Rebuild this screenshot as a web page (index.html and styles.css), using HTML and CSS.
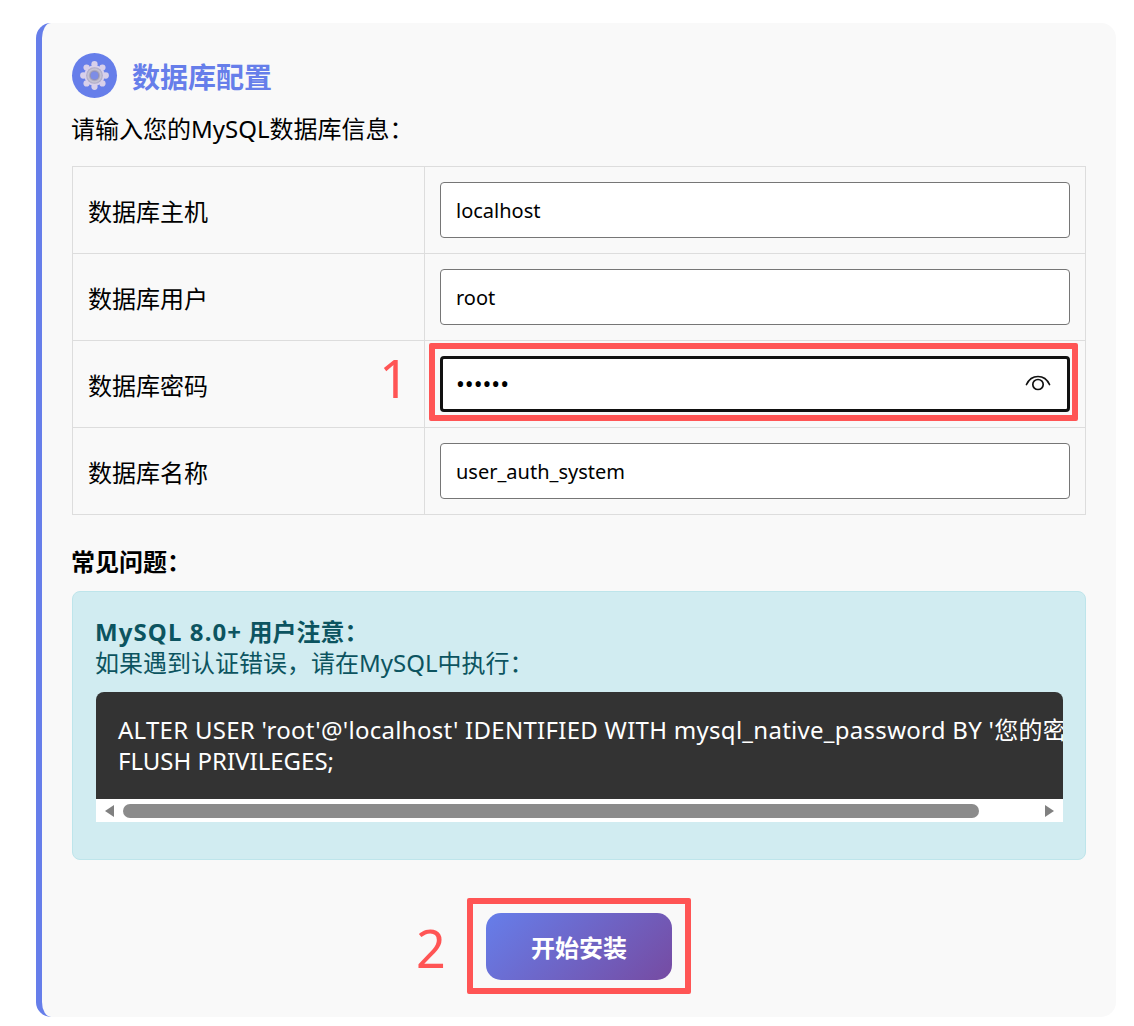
FILE: index.html
```html
<!DOCTYPE html>
<html lang="zh-CN">

<head>
    <meta charset="UTF-8">
    <title>数据库配置</title>
    <link rel="stylesheet" href="styles.css">
</head>

<body>
    <div class="card">
        <!-- header -->
        <div class="card-head">
            <span class="head-icon">
                <svg width="45" height="45" viewBox="0 0 46 46">
                    <defs>
                        <radialGradient id="ring">
                            <stop offset="45%" stop-color="#8d8aa8" />
                            <stop offset="75%" stop-color="#c9c6d6" />
                            <stop offset="100%" stop-color="#aaa6c4" />
                        </radialGradient>
                    </defs>
                    <g fill="#d8d0ea">
                        <circle cx="23" cy="23" r="10.5" />
                        <circle cx="23" cy="11.5" r="3.2" />
                        <circle cx="23" cy="34.5" r="3.2" />
                        <circle cx="11.5" cy="23" r="3.2" />
                        <circle cx="34.5" cy="23" r="3.2" />
                        <circle cx="14.9" cy="14.9" r="3.2" />
                        <circle cx="31.1" cy="14.9" r="3.2" />
                        <circle cx="14.9" cy="31.1" r="3.2" />
                        <circle cx="31.1" cy="31.1" r="3.2" />
                    </g>
                    <circle cx="23" cy="23" r="8.5" fill="url(#ring)" />
                    <circle cx="23" cy="23" r="4" fill="#7d8de6" />
                </svg>
            </span>
            <h2 class="card-title">数据库配置</h2>
        </div>
        <p class="intro">请输入您的MySQL数据库信息：</p>

        <!-- form table -->
        <table class="db-table">
            <tr>
                <td class="label-cell">数据库主机</td>
                <td class="input-cell"><input class="field" type="text" value="localhost"></td>
            </tr>
            <tr>
                <td class="label-cell">数据库用户</td>
                <td class="input-cell"><input class="field" type="text" value="root"></td>
            </tr>
            <tr>
                <td class="label-cell">
                    数据库密码
                    <span class="mark-num mark-one">1</span>
                </td>
                <td class="input-cell">
                    <input class="field field-focus" type="password" value="secret">
                    <svg class="eye-icon" width="28" height="24" viewBox="0 0 28 24">
                        <path d="M2.5 13.5 C5 8 9 5.5 14 5.5 C19 5.5 23 8 25.5 13.5" fill="none" stroke="#111" stroke-width="1.7" stroke-linecap="round" />
                        <ellipse cx="14" cy="13.5" rx="5.2" ry="5" fill="none" stroke="#111" stroke-width="1.7" />
                    </svg>
                    <span class="mark-box mark-box-field"></span>
                </td>
            </tr>
            <tr>
                <td class="label-cell">数据库名称</td>
                <td class="input-cell"><input class="field" type="text" value="user_auth_system"></td>
            </tr>
        </table>

        <h4 class="faq-title">常见问题：</h4>
        <div class="notice">
            <strong class="notice-title"><span class="wide-latin">MySQL 8.0+</span> 用户注意：</strong>
            <div class="notice-text">如果遇到认证错误，请在MySQL中执行：</div>
            <div class="code-wrap">
                <pre class="code"><span class="code-long">ALTER USER 'root'@'localhost' IDENTIFIED WITH mysql_native_password BY '您的密码';</span>
FLUSH PRIVILEGES;</pre>
                <!-- scrollbar -->
                <div class="scrollbar">
                    <span class="arrow-left"></span>
                    <span class="thumb"></span>
                    <span class="arrow-right"></span>
                </div>
            </div>
        </div>

        <div class="actions">
            <div class="btn-wrap">
                <span class="mark-num mark-two">2</span>
                <button class="install-btn" type="button">开始安装</button>
                <span class="mark-box mark-box-btn"></span>
            </div>
        </div>
    </div>
</body>

</html>
```

FILE: styles.css
```css
* {
    box-sizing: border-box;
}

body {
    margin: 0;
    padding: 23px 18px 9px 36px;
    background-color: #fff;
    color: #000;
    font-family: "Noto Sans", "Noto Sans CJK SC", sans-serif;
    font-size: 24px;
}

.card {
    height: 994px;
    padding: 30px 30px 0 30px;
    background-color: #f9f9f9;
    border-left: 6px solid #667eea;
    border-radius: 15px;
}

.card-head {
    display: flex;
    align-items: center;
    gap: 15px;
    margin-bottom: 13px;
}

.head-icon {
    display: flex;
    width: 45px;
    height: 45px;
    background-color: #667eea;
    border-radius: 50%;
}

.card-title {
    margin: 0;
    color: #667eea;
    font-size: 28px;
    font-weight: bold;
}

.intro {
    margin: 0 0 19px -1px;
    line-height: 36px;
}

.db-table {
    width: 100%;
    table-layout: fixed;
    border-collapse: collapse;
}

.db-table td {
    height: 87px;
    padding: 15px;
    border: 1px solid #ddd;
    position: relative;
}

.label-cell {
    width: 352px;
}

.field {
    display: block;
    width: 100%;
    height: 56px;
    padding: 0 15px;
    background: #fff;
    border: 1px solid #767676;
    border-radius: 4px;
    color: #000;
    font-family: "Noto Sans", "Noto Sans CJK SC", sans-serif;
    font-size: 20px;
}

.field-focus {
    border: 3px solid #111;
    padding: 0 13px;
    font-size: 23.5px;
}

.eye-icon {
    position: absolute;
    right: 33px;
    top: 30px;
}

.mark-num {
    position: absolute;
    color: #ff5555;
    font-size: 52px;
    line-height: 60px;
}

.mark-one {
    right: 15px;
    top: 7px;
}

.mark-two {
    left: -70px;
    top: 5px;
}

.mark-box {
    position: absolute;
    border: 6px solid #ff5555;
    border-radius: 2px;
}

.mark-box-field {
    left: 4px;
    right: 7px;
    top: 2px;
    bottom: 6px;
}

.mark-box-btn {
    left: -19px;
    right: -19px;
    top: -15px;
    bottom: -14px;
}

.faq-title {
    margin: 29px 0 11px -1px;
    font-size: 24px;
    line-height: 36px;
    font-weight: bold;
}

.notice {
    height: 269px;
    padding: 24px 22px 0 23px;
    background-color: #d1ecf1;
    border: 1px solid #bee5eb;
    border-radius: 8px;
    color: #0c5460;
    line-height: 31px;
}

.notice-title {
    display: block;
    margin-left: -1px;
    font-weight: bold;
}

.wide-latin {
    letter-spacing: 1.1px;
}

.notice-text {
    margin: 0 0 14px -1px;
}

.code-wrap {
    overflow: hidden;
    border-radius: 8px 8px 0 0;
}

.code {
    margin: 0;
    height: 107px;
    padding: 22px;
    overflow: hidden;
    background-color: #333;
    color: #fff;
    font-family: "Noto Sans", "Noto Sans CJK SC", sans-serif;
    font-size: 24px;
    line-height: 31px;
}

.code-long {
    letter-spacing: 0.28px;
}

.scrollbar {
    display: flex;
    align-items: center;
    height: 23px;
    padding: 0 9px;
    background-color: #fff;
}

.thumb {
    width: 856px;
    height: 14px;
    margin-left: 9px;
    background-color: #8b8b8b;
    border-radius: 7px;
}

.arrow-left,
.arrow-right {
    width: 0;
    height: 0;
    border-top: 6px solid transparent;
    border-bottom: 6px solid transparent;
}

.arrow-left {
    border-right: 9px solid #808080;
}

.arrow-right {
    margin-left: auto;
    border-left: 9px solid #808080;
}

.actions {
    display: flex;
    justify-content: center;
    margin-top: 53px;
}

.btn-wrap {
    position: relative;
}

.install-btn {
    display: block;
    width: 186px;
    height: 67px;
    background: linear-gradient(135deg, #667eea 0%, #764ba2 100%);
    border: 0;
    border-radius: 15px;
    color: #fff;
    font-family: "Noto Sans", "Noto Sans CJK SC", sans-serif;
    font-size: 24px;
    font-weight: bold;
}
```
